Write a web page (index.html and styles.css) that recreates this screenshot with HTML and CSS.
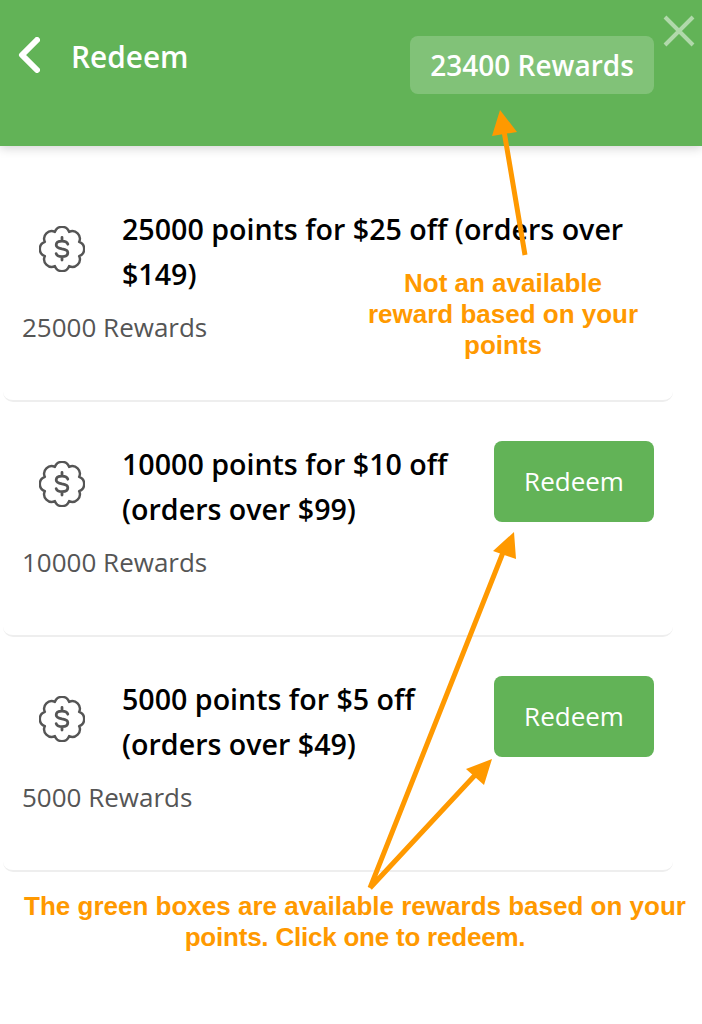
FILE: index.html
```html
<!DOCTYPE html>
<html lang="en">
<head>
<meta charset="utf-8">
<title>Redeem</title>
<link rel="stylesheet" href="styles.css">
</head>
<body>
<div class="page">
  <header class="topbar">
    <svg class="back" width="22" height="36" viewBox="0 0 22 36"><path d="M19 3 4 18l15 15"/></svg>
    <h1 class="title">Redeem</h1>
    <div class="balance">23400 Rewards</div>
  </header>
  <svg class="close" width="32" height="32" viewBox="0 0 32 32"><path d="M2 2l28 28M30 2 2 30"/></svg>
  <main class="list">
    <section class="card">
      <div class="info">
        <div class="head">
          <svg class="badge" width="46" height="46" viewBox="0 0 46 46"><use href="#badge-shape"/></svg>
          <h2 class="name">25000 points for $25 off (orders over $149)</h2>
        </div>
        <p class="cost">25000 Rewards</p>
      </div>
    </section>
    <section class="card">
      <div class="info">
        <div class="head">
          <svg class="badge" width="46" height="46" viewBox="0 0 46 46"><use href="#badge-shape"/></svg>
          <h2 class="name narrow">10000 points for $10 off (orders over $99)</h2>
        </div>
        <p class="cost">10000 Rewards</p>
      </div>
      <button class="redeem">Redeem</button>
    </section>
    <section class="card">
      <div class="info">
        <div class="head">
          <svg class="badge" width="46" height="46" viewBox="0 0 46 46"><use href="#badge-shape"/></svg>
          <h2 class="name narrow">5000 points for $5 off (orders over $49)</h2>
        </div>
        <p class="cost">5000 Rewards</p>
      </div>
      <button class="redeem">Redeem</button>
    </section>
  </main>
  <svg class="arrows" width="702" height="1024" viewBox="0 0 702 1024">
    <path class="shaft" d="M525 255 503 125M370 888 506 545M370 888 477 773"/>
    <path class="tip" d="M500 110 492 136 517 132ZM514 532 493 551 516 559ZM492 759 466 769 484 785Z"/>
  </svg>
  <p class="note note-top">Not an available<br>reward based on your<br>points</p>
  <p class="note note-bottom">The green boxes are available rewards based on your<br><span class="tight">points. Click one to redeem.</span></p>
</div>
<svg class="defs" width="0" height="0">
  <defs>
    <g id="badge-shape">
      <path d="M30.1 5.9A7.5 7.5 0 0 1 40.1 15.9A7.5 7.5 0 0 1 40.1 30.1A7.5 7.5 0 0 1 30.1 40.1A7.5 7.5 0 0 1 15.9 40.1A7.5 7.5 0 0 1 5.9 30.1A7.5 7.5 0 0 1 5.9 15.9A7.5 7.5 0 0 1 15.9 5.9A7.5 7.5 0 0 1 30.1 5.9Z"/>
      <path class="dollar" d="M28.8 18.2c-.6-2-2.8-3-5.8-3-3.4 0-5.8 1.5-5.8 3.8 0 2.5 2.5 3.3 5.8 3.9 3.3.5 5.8 1.4 5.8 3.8 0 2.4-2.4 3.9-5.8 3.9-3 0-5.2-1-5.8-3M23 11.5v3.7M23 30.6V34"/>
    </g>
  </defs>
</svg>
</body>
</html>
```
FILE: styles.css
```css
* { box-sizing: border-box; }
html, body { margin: 0; padding: 0; background: #fff; }
body { font-family: "Open Sans", sans-serif; }
.page { position: relative; width: 702px; height: 1024px; overflow: hidden; }
.defs { position: absolute; }

.topbar {
  display: flex;
  align-items: flex-start;
  height: 146px;
  padding: 36px 48px 0 18px;
  background: #62b357;
  box-shadow: 0 2px 10px rgba(0, 0, 0, .18);
}
.back { flex: none; margin-top: 1px; }
.back path { fill: none; stroke: #fff; stroke-width: 6; stroke-linecap: round; stroke-linejoin: round; }
.title {
  margin: 0 0 0 31px;
  font-size: 29.8px;
  line-height: 42px;
  font-weight: 600;
  color: #fff;
}
.balance {
  margin-left: auto;
  width: 244px;
  height: 58px;
  border-radius: 8px;
  background: rgba(255, 255, 255, .2);
  color: #fff;
  font-size: 28px;
  font-weight: 600;
  line-height: 58px;
  text-align: center;
}
.close { position: absolute; left: 663px; top: 15px; }
.close path { fill: none; stroke: rgba(255, 255, 255, .5); stroke-width: 4; }

.list { width: 670px; margin: 21px 0 0 3px; }
.card {
  display: flex;
  align-items: flex-start;
  height: 235px;
  padding: 39px 19px 0 19px;
  border-bottom: 2px solid #eeeeee;
  border-radius: 0 0 10px 10px;
}
.info { flex: 1; min-width: 0; }
.head { display: flex; align-items: flex-start; }
.badge { flex: none; margin: 20px 37px 0 17px; fill: none; stroke: #555; stroke-width: 2.4; stroke-linecap: round; stroke-linejoin: round; }
.dollar { stroke-width: 2.8; }
.name {
  margin: 0;
  font-size: 28.6px;
  line-height: 45px;
  font-weight: 600;
  color: #000;
}
.name.narrow { max-width: 340px; }
.cost {
  margin: 14px 0 0;
  font-size: 26px;
  line-height: 34px;
  color: #555;
}
.redeem {
  flex: none;
  width: 160px;
  height: 81px;
  padding: 0 0 2px;
  border: 0;
  border-radius: 8px;
  background: #62b357;
  color: #fff;
  font-family: inherit;
  font-size: 26px;
}

.arrows { position: absolute; left: 0; top: 0; pointer-events: none; }
.shaft { fill: none; stroke: #ff9900; stroke-width: 5; }
.tip { fill: #ff9900; }
.note {
  position: absolute;
  margin: 0;
  font-family: "Liberation Sans", Arial, sans-serif;
  font-weight: 700;
  font-size: 26px;
  line-height: 31px;
  color: #ff9900;
  text-align: center;
  white-space: nowrap;
}
.tight { letter-spacing: -.22px; }
.note-top { left: 353px; width: 300px; top: 268px; }
.note-bottom { left: 5px; width: 700px; top: 891px; }
```
